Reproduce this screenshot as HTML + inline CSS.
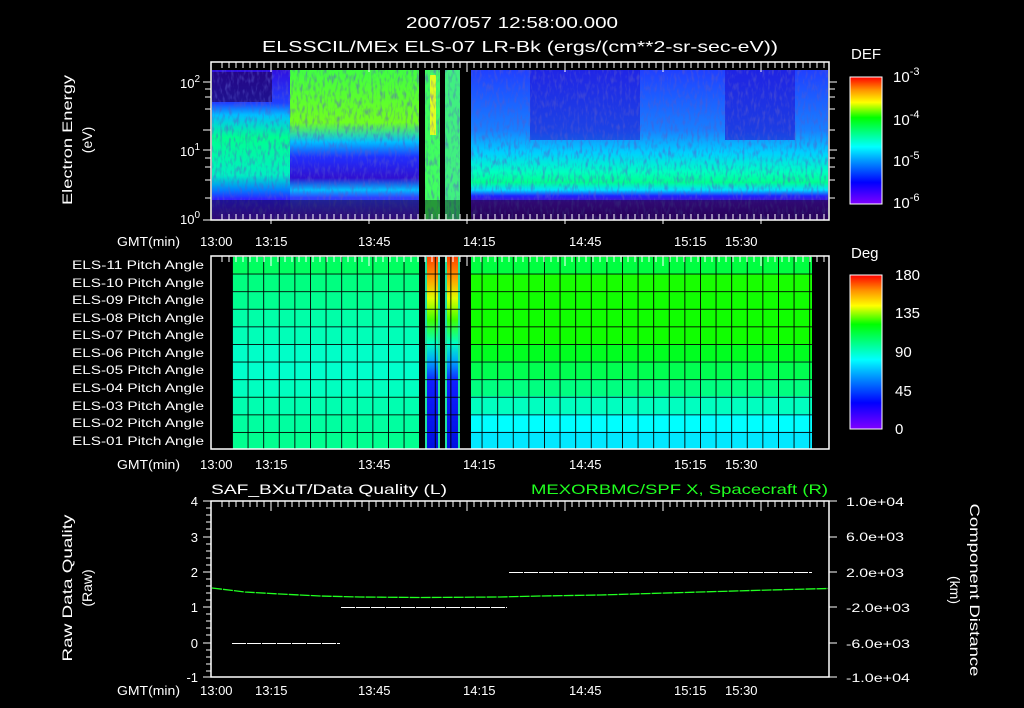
<!DOCTYPE html>
<html><head><meta charset="utf-8"><style>
html,body{margin:0;padding:0;background:#000;width:1024px;height:708px;overflow:hidden}
svg{display:block}
text{font-family:"Liberation Sans",sans-serif;fill:#fff}
</style></head><body>
<svg width="1024" height="708" viewBox="0 0 1024 708" xmlns="http://www.w3.org/2000/svg">
<defs>
<linearGradient id="cb" x1="0" y1="1" x2="0" y2="0">
<stop offset="0" stop-color="#8000ff"/><stop offset="0.17" stop-color="#0000ff"/><stop offset="0.35" stop-color="#00a0ff"/><stop offset="0.45" stop-color="#00ffff"/><stop offset="0.55" stop-color="#00ff90"/><stop offset="0.68" stop-color="#00ff00"/><stop offset="0.8" stop-color="#ffff00"/><stop offset="0.9" stop-color="#ff9000"/><stop offset="1" stop-color="#ff0000"/>
</linearGradient>
<linearGradient id="bar" x1="0" y1="0" x2="0" y2="1">
<stop offset="0" stop-color="#ff4000"/><stop offset="0.12" stop-color="#ffa000"/><stop offset="0.22" stop-color="#e0ff00"/><stop offset="0.33" stop-color="#40ff00"/><stop offset="0.45" stop-color="#00ffc0"/><stop offset="0.55" stop-color="#00a0ff"/><stop offset="0.65" stop-color="#1020ff"/><stop offset="1" stop-color="#0010e0"/>
</linearGradient>
<linearGradient id="leftG" x1="0" y1="0" x2="0" y2="1">
<stop offset="0" stop-color="#3010e0"/><stop offset="0.22" stop-color="#2040ff"/><stop offset="0.3" stop-color="#00c0ff"/><stop offset="0.45" stop-color="#00ff90"/><stop offset="0.7" stop-color="#00f0c0"/><stop offset="0.8" stop-color="#0080ff"/><stop offset="0.86" stop-color="#3020ff"/><stop offset="1" stop-color="#5010c0"/>
</linearGradient>
<linearGradient id="midG" x1="0" y1="0" x2="0" y2="1">
<stop offset="0" stop-color="#40ff40"/><stop offset="0.35" stop-color="#70ff20"/><stop offset="0.48" stop-color="#00c0ff"/><stop offset="0.58" stop-color="#2030ff"/><stop offset="0.72" stop-color="#3010d0"/><stop offset="0.8" stop-color="#00c0ff"/><stop offset="0.85" stop-color="#3040ff"/><stop offset="1" stop-color="#5010c0"/>
</linearGradient>
<linearGradient id="rightG" x1="0" y1="0" x2="0" y2="1">
<stop offset="0" stop-color="#2040ff"/><stop offset="0.4" stop-color="#1880ff"/><stop offset="0.55" stop-color="#00d0ff"/><stop offset="0.68" stop-color="#00ffc0"/><stop offset="0.75" stop-color="#00ff90"/><stop offset="0.8" stop-color="#00e0ff"/><stop offset="0.84" stop-color="#2020ff"/><stop offset="0.88" stop-color="#5010c0"/><stop offset="1" stop-color="#400090"/>
</linearGradient>
<filter id="noise" x="0" y="0" width="100%" height="100%">
<feTurbulence type="fractalNoise" baseFrequency="0.35 0.12" numOctaves="2" seed="4"/>
<feColorMatrix type="matrix" values="0 0 0 0 0.1  0 0 0 0 0.1  0 0 0 0 0.6  0 0 0 -3 1.6"/>
</filter>
<pattern id="grid" x="232" y="256" width="15.6" height="17.6" patternUnits="userSpaceOnUse">
<path d="M0 0V17.6M0 0H15.6" stroke="#000" stroke-width="1.8" fill="none"/>
</pattern>
</defs>

<text x="512" y="28" font-size="16" text-anchor="middle" textLength="212" lengthAdjust="spacingAndGlyphs">2007/057 12:58:00.000</text>
<text x="262" y="52" font-size="16" textLength="516" lengthAdjust="spacingAndGlyphs">ELSSCIL/MEx ELS-07 LR-Bk  (ergs/(cm**2-sr-sec-eV))</text>

<rect x="212" y="70" width="616" height="150" fill="#1060ff"/>
<rect x="212" y="70" width="78" height="150" fill="url(#leftG)"/>
<rect x="290" y="70" width="130" height="150" fill="url(#midG)"/>
<rect x="471" y="70" width="357" height="150" fill="url(#rightG)"/>
<rect x="530" y="70" width="110" height="70" fill="#2010d0" opacity="0.55"/>
<rect x="725" y="70" width="70" height="70" fill="#2010d0" opacity="0.6"/>
<rect x="425" y="70" width="15" height="150" fill="#40ff60"/>
<rect x="430" y="75" width="6" height="60" fill="#e0ff20"/>
<rect x="445" y="70" width="15" height="150" fill="#40f080"/>
<rect x="212" y="72" width="60" height="30" fill="#200060" opacity="0.7"/>
<rect x="212" y="70" width="616" height="150" filter="url(#noise)" opacity="0.5"/>
<rect x="212" y="200" width="616" height="20" fill="#000" opacity="0.4"/>
<rect x="419" y="70" width="6" height="150" fill="#000"/>
<rect x="440" y="70" width="5" height="150" fill="#000"/>
<rect x="460" y="70" width="11" height="150" fill="#000"/>
<rect x="211" y="62" width="618" height="158" fill="none" stroke="#fff" stroke-width="1.5"/>
<g stroke="#fff" stroke-width="1">
<path d="M203 82H211M205 89H211M205 97H211M205 109H211M203 130H211M203 150H211M205 158H211M205 167H211M205 180H211M205 198H211M203 220H211"/>
<path d="M829 82H837M829 89H835M829 97H835M829 109H835M829 130H835M829 150H837M829 158H835M829 167H835M829 180H835M829 198H835"/>
</g>
<text x="200" y="88" font-size="13" text-anchor="end">10<tspan dy="-6" font-size="10">2</tspan></text>
<text x="200" y="156" font-size="13" text-anchor="end">10<tspan dy="-6" font-size="10">1</tspan></text>
<text x="200" y="224" font-size="13" text-anchor="end">10<tspan dy="-6" font-size="10">0</tspan></text>
<text transform="translate(72,140) rotate(-90)" font-size="14" text-anchor="middle" textLength="130" lengthAdjust="spacingAndGlyphs">Electron Energy</text>
<text transform="translate(92,140) rotate(-90)" font-size="14" text-anchor="middle">(eV)</text>

<text x="851" y="59" font-size="15">DEF</text>
<rect x="850" y="77" width="32" height="127" fill="url(#cb)" stroke="#fff" stroke-width="1"/>
<text x="893" y="82" font-size="15">10<tspan dy="-7" font-size="11">-3</tspan></text>
<text x="893" y="125" font-size="15">10<tspan dy="-7" font-size="11">-4</tspan></text>
<text x="893" y="166" font-size="15">10<tspan dy="-7" font-size="11">-5</tspan></text>
<text x="893" y="208" font-size="15">10<tspan dy="-7" font-size="11">-6</tspan></text>

<g font-size="13">
<text x="117" y="246" textLength="63" lengthAdjust="spacingAndGlyphs">GMT(min)</text>
<text x="200" y="246">13:00</text><text x="255" y="246">13:15</text><text x="358" y="246">13:45</text><text x="463" y="246">14:15</text><text x="569" y="246">14:45</text><text x="674" y="246">15:15</text><text x="725" y="246">15:30</text>
</g>

<rect x="211" y="256" width="618" height="193" fill="#000"/>
<g>
<rect x="232" y="256" width="187" height="18" fill="#00ff60"/>
<rect x="232" y="274" width="187" height="17" fill="#00ff80"/>
<rect x="232" y="291" width="187" height="18" fill="#00ff90"/>
<rect x="232" y="309" width="187" height="17" fill="#00ffa8"/>
<rect x="232" y="326" width="187" height="18" fill="#00ffb8"/>
<rect x="232" y="344" width="187" height="17" fill="#00ffc8"/>
<rect x="232" y="361" width="187" height="18" fill="#00ffcc"/>
<rect x="232" y="379" width="187" height="17" fill="#00ffc0"/>
<rect x="232" y="396" width="187" height="18" fill="#00ffb0"/>
<rect x="232" y="414" width="187" height="17" fill="#00ffa0"/>
<rect x="232" y="431" width="187" height="18" fill="#00ff90"/>
<rect x="471" y="256" width="341" height="18" fill="#00ff40"/>
<rect x="471" y="274" width="341" height="17" fill="#18ff00"/>
<rect x="471" y="291" width="341" height="18" fill="#10ff00"/>
<rect x="471" y="309" width="341" height="17" fill="#10ff00"/>
<rect x="471" y="326" width="341" height="18" fill="#10ff00"/>
<rect x="471" y="344" width="341" height="17" fill="#00ff20"/>
<rect x="471" y="361" width="341" height="18" fill="#00ff50"/>
<rect x="471" y="379" width="341" height="17" fill="#00ff80"/>
<rect x="471" y="396" width="341" height="18" fill="#00ffc0"/>
<rect x="471" y="414" width="341" height="17" fill="#00ffff"/>
<rect x="471" y="431" width="341" height="18" fill="#00e8ff"/>
<rect x="425" y="256" width="15" height="193" fill="#20e0a0"/>
<rect x="445" y="256" width="15" height="193" fill="#20e0a0"/>
<rect x="427" y="256" width="11" height="193" fill="url(#bar)"/>
<rect x="447" y="256" width="11" height="193" fill="url(#bar)"/>
<rect x="232" y="256" width="580" height="193" fill="url(#grid)"/>
<rect x="419" y="256" width="6" height="193" fill="#000"/>
<rect x="440" y="256" width="5" height="193" fill="#000"/>
<rect x="460" y="256" width="11" height="193" fill="#000"/>
</g>
<rect x="211" y="256" width="618" height="193" fill="none" stroke="#fff" stroke-width="1.5"/>
<g font-size="12" text-anchor="end">
<text x="204" y="269" textLength="132" lengthAdjust="spacingAndGlyphs">ELS-11 Pitch Angle</text>
<text x="204" y="287" textLength="132" lengthAdjust="spacingAndGlyphs">ELS-10 Pitch Angle</text>
<text x="204" y="304" textLength="132" lengthAdjust="spacingAndGlyphs">ELS-09 Pitch Angle</text>
<text x="204" y="322" textLength="132" lengthAdjust="spacingAndGlyphs">ELS-08 Pitch Angle</text>
<text x="204" y="339" textLength="132" lengthAdjust="spacingAndGlyphs">ELS-07 Pitch Angle</text>
<text x="204" y="357" textLength="132" lengthAdjust="spacingAndGlyphs">ELS-06 Pitch Angle</text>
<text x="204" y="374" textLength="132" lengthAdjust="spacingAndGlyphs">ELS-05 Pitch Angle</text>
<text x="204" y="392" textLength="132" lengthAdjust="spacingAndGlyphs">ELS-04 Pitch Angle</text>
<text x="204" y="410" textLength="132" lengthAdjust="spacingAndGlyphs">ELS-03 Pitch Angle</text>
<text x="204" y="427" textLength="132" lengthAdjust="spacingAndGlyphs">ELS-02 Pitch Angle</text>
<text x="204" y="445" textLength="132" lengthAdjust="spacingAndGlyphs">ELS-01 Pitch Angle</text>
</g>
<text x="851" y="258" font-size="15">Deg</text>
<rect x="850" y="275" width="32" height="154" fill="url(#cb)" stroke="#fff" stroke-width="1"/>
<g font-size="15">
<text x="895" y="280">180</text><text x="895" y="318">135</text><text x="895" y="357">90</text><text x="895" y="396">45</text><text x="895" y="434">0</text>
</g>
<g font-size="13">
<text x="117" y="469" textLength="63" lengthAdjust="spacingAndGlyphs">GMT(min)</text>
<text x="200" y="469">13:00</text><text x="255" y="469">13:15</text><text x="358" y="469">13:45</text><text x="463" y="469">14:15</text><text x="569" y="469">14:45</text><text x="674" y="469">15:15</text><text x="725" y="469">15:30</text>
</g>

<g stroke="#fff" stroke-width="1">
<path id="tk" d="M222 62v6M229 62v6M236 62v6M243 62v6M250 62v6M257 62v6M264 62v6M271 62v10M278 62v6M285 62v6M292 62v6M299 62v6M306 62v6M313 62v6M320 62v6M327 62v6M334 62v6M341 62v6M348 62v6M355 62v6M362 62v6M369 62v10M376 62v6M383 62v6M390 62v6M397 62v6M404 62v6M411 62v6M418 62v6M425 62v6M432 62v6M439 62v6M446 62v6M453 62v6M460 62v6M467 62v10M474 62v6M481 62v6M488 62v6M495 62v6M502 62v6M509 62v6M516 62v6M523 62v6M530 62v6M537 62v6M544 62v6M551 62v6M558 62v6M565 62v10M572 62v6M579 62v6M586 62v6M593 62v6M600 62v6M607 62v6M614 62v6M621 62v6M628 62v6M635 62v6M642 62v6M649 62v6M656 62v6M663 62v10M670 62v6M677 62v6M684 62v6M691 62v6M698 62v6M705 62v6M712 62v6M719 62v6M726 62v6M733 62v6M740 62v6M747 62v6M754 62v6M761 62v10M768 62v6M775 62v6M782 62v6M789 62v6M796 62v6M803 62v6M810 62v6M817 62v6M824 62v6"/>
<use href="#tk" transform="translate(0,152)"/>
<use href="#tk" transform="translate(0,194)"/>
<use href="#tk" transform="translate(0,439)"/>
<use href="#tk" transform="translate(0,670)"/>
</g>

<text x="211" y="494" font-size="14" textLength="236" lengthAdjust="spacingAndGlyphs">SAF_BXuT/Data Quality (L)</text>
<text x="531" y="494" font-size="14" textLength="297" lengthAdjust="spacingAndGlyphs" style="fill:#20ff20">MEXORBMC/SPF X, Spacecraft (R)</text>
<rect x="211" y="501" width="618" height="176" fill="none" stroke="#fff" stroke-width="1.5"/>
<g stroke="#fff" stroke-width="1">
<path d="M203 501h8M203 537h8M203 572h8M203 607h8M203 643h8M203 677h8M206 508h5M206 515h5M206 522h5M206 529h5M206 544h5M206 551h5M206 558h5M206 565h5M206 579h5M206 586h5M206 593h5M206 600h5M206 614h5M206 621h5M206 628h5M206 635h5M206 650h5M206 657h5M206 664h5M206 671h5"/>
<path d="M829 501h8M829 537h8M829 572h8M829 607h8M829 643h8M829 677h8"/>
</g>
<g font-size="13" text-anchor="end">
<text x="198" y="506">4</text><text x="198" y="542">3</text><text x="198" y="577">2</text><text x="198" y="612">1</text><text x="198" y="648">0</text><text x="198" y="682">-1</text>
</g>
<g font-size="12">
<text x="846" y="506" textLength="58" lengthAdjust="spacingAndGlyphs">1.0e+04</text><text x="846" y="541" textLength="58" lengthAdjust="spacingAndGlyphs">6.0e+03</text><text x="846" y="577" textLength="58" lengthAdjust="spacingAndGlyphs">2.0e+03</text><text x="846" y="612" textLength="64" lengthAdjust="spacingAndGlyphs">-2.0e+03</text><text x="846" y="648" textLength="64" lengthAdjust="spacingAndGlyphs">-6.0e+03</text><text x="846" y="682" textLength="64" lengthAdjust="spacingAndGlyphs">-1.0e+04</text>
</g>
<text transform="translate(72,588) rotate(-90)" font-size="14" text-anchor="middle" textLength="147" lengthAdjust="spacingAndGlyphs">Raw Data Quality</text>
<text transform="translate(92,588) rotate(-90)" font-size="14" text-anchor="middle">(Raw)</text>
<text transform="translate(970,590) rotate(90)" font-size="14" text-anchor="middle" textLength="173" lengthAdjust="spacingAndGlyphs">Component Distance</text>
<text transform="translate(950,590) rotate(90)" font-size="14" text-anchor="middle">(km)</text>
<g stroke="#fff" stroke-width="1.2" stroke-dasharray="14 1" shape-rendering="crispEdges">
<path d="M232 643.5H340M341 607.5H507M509 572.5H812"/>
</g>
<path d="M212 588L245 592L280 594L320 596L360 597L420 597.5L500 597L540 596L600 595L700 592L770 590L828 588.5" stroke="#20ff20" stroke-width="1.3" fill="none" stroke-dasharray="10 1"/>
<g font-size="13">
<text x="117" y="695" textLength="63" lengthAdjust="spacingAndGlyphs">GMT(min)</text>
<text x="200" y="695">13:00</text><text x="255" y="695">13:15</text><text x="358" y="695">13:45</text><text x="463" y="695">14:15</text><text x="569" y="695">14:45</text><text x="674" y="695">15:15</text><text x="725" y="695">15:30</text>
</g>
</svg>
</body></html>
